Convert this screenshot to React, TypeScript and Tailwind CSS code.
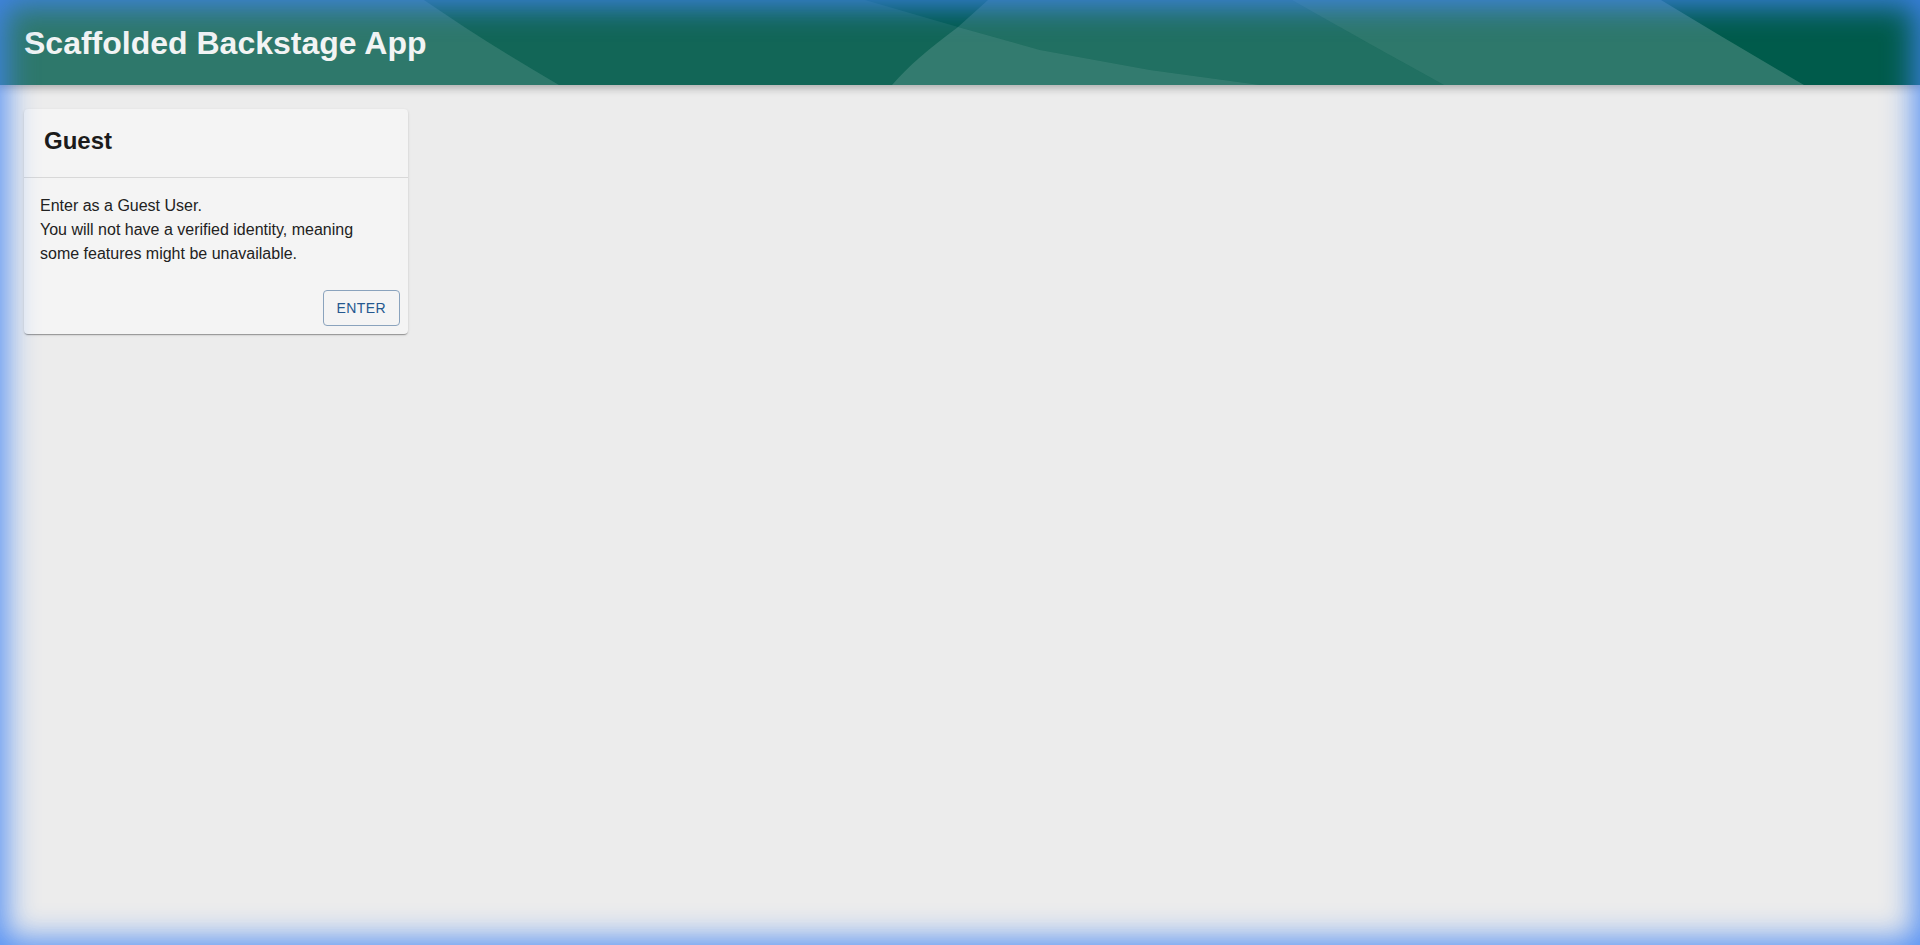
import React from "react";

function HeaderWaves() {
  return (
    <svg
      className="absolute inset-0 h-full w-full"
      viewBox="0 0 1920 85"
      preserveAspectRatio="none"
      aria-hidden="true"
    >
      <rect x="0" y="0" width="1920" height="85" fill="#005b4b" />
      <path d="M0 0 H424 C468 30 512 58 559 85 H0 Z" fill="#ffffff" fillOpacity="0.18" />
      <path
        d="M424 0 H865 L958 27 C930 48 908 66 892 85 H559 C512 58 468 30 424 0 Z"
        fill="#ffffff"
        fillOpacity="0.07"
      />
      <path
        d="M958 27 L1040 50 L1150 70 L1260 85 H892 C908 66 930 48 958 27 Z"
        fill="#ffffff"
        fillOpacity="0.2"
      />
      <path
        d="M988 0 H1292 C1345 30 1395 58 1444 85 H1260 L1150 70 L1040 50 L958 27 C968 18 978 9 988 0 Z"
        fill="#ffffff"
        fillOpacity="0.13"
      />
      <path
        d="M1292 0 H1661 C1710 30 1758 58 1804 85 H1444 C1395 58 1345 30 1292 0 Z"
        fill="#ffffff"
        fillOpacity="0.18"
      />
    </svg>
  );
}

export default function App() {
  return (
    <div
      className="relative flex h-[945px] w-full flex-col overflow-hidden bg-[#ececec]"
      style={{ fontFamily: '"Liberation Sans", Arial, Helvetica, sans-serif' }}
    >
      <header className="relative z-10 flex h-[85px] shrink-0 items-center px-6 shadow-[0_0_8px_3px_rgba(20,20,20,0.3)]">
        <HeaderWaves />
        <h1 className="relative text-[32px] font-bold leading-none text-[#f2f4f4]">
          Scaffolded Backstage App
        </h1>
      </header>

      <main className="flex-1 p-6">
        <div className="flex w-[384px] flex-col rounded bg-[#f4f4f4] shadow-[0_2px_1px_-1px_rgba(0,0,0,0.2),0_1px_1px_0_rgba(0,0,0,0.14),0_1px_3px_0_rgba(0,0,0,0.12)]">
          <div className="flex h-[68px] items-center px-5 pb-1">
            <h2 className="text-2xl font-bold text-[#1b1b1b]">Guest</h2>
          </div>
          <div className="h-px bg-[#d8d8d8]" />
          <div className="p-4 text-base leading-6 text-[#222222]">
            <p>Enter as a Guest User.</p>
            <p>
              You will not have a verified identity, meaning some features might be
              unavailable.
            </p>
          </div>
          <div className="flex justify-end p-2">
            <button className="h-[36px] rounded border border-[#8aa3bd] px-[13px] text-sm uppercase tracking-[0.02857em] text-[#24588f]">
              Enter
            </button>
          </div>
        </div>
      </main>

      <div className="pointer-events-none fixed inset-0 z-50 shadow-[inset_0_0_30px_6px_rgba(66,133,244,0.9)]" />
    </div>
  );
}
